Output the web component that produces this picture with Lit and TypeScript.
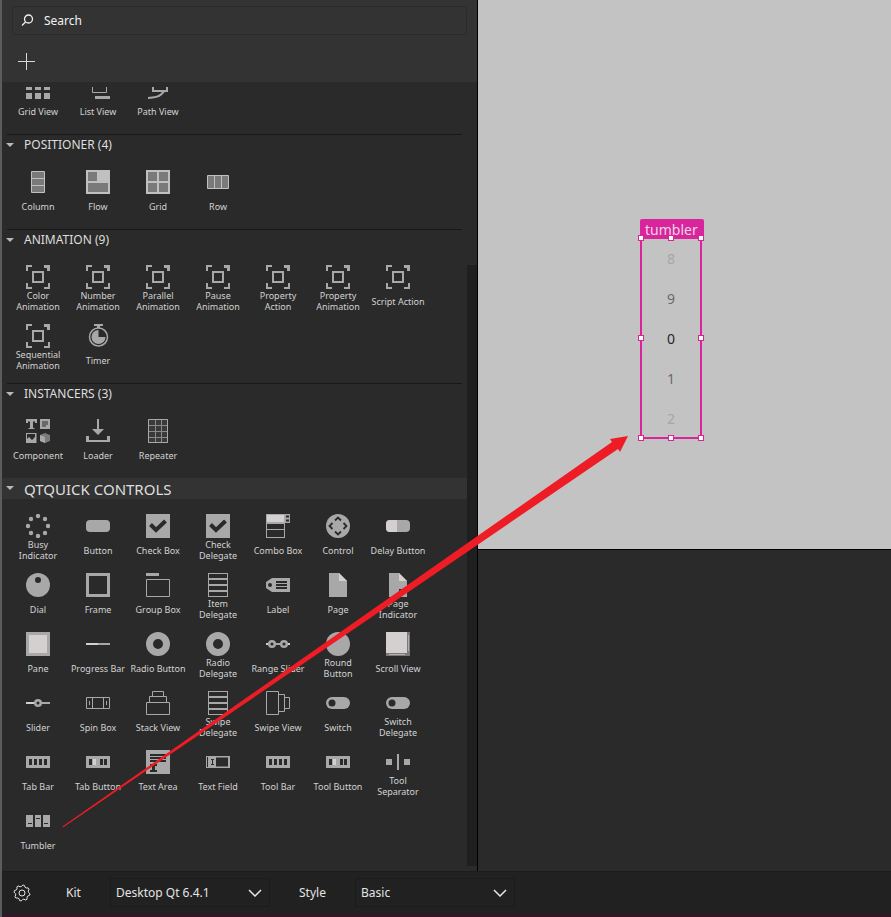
import { LitElement, html, css, svg } from "lit";
import { customElement, query } from "lit/decorators.js";

const brackets = svg`
  <path d="M0 0h6v2h-4v4h-2zM18 0h6v6h-3v-3h-3zM0 18h2v4h4v2h-6zM22 18h2v6h-6v-2h4z"/>
  <path d="M7 7h10v10h-10z" fill="none" stroke="#a8a8a8" stroke-width="2"/>`;
const check = svg`<path d="M0 0h24v24h-24z"/><path d="M4.500 10.500l5.500 5.500 9.500-9" fill="none" stroke="#2a2a2a" stroke-width="4"/>`;
const rows = svg`<path fill-rule="evenodd" d="M2 0h20v24h-20zM3 1v4h18v-4zM3 7v4h18v-4zM3 13v4h18v-4zM3 19v4h18v-4z"/>`;
const ring = svg`<circle cx="12" cy="12" r="8.500" fill="none" stroke="#a8a8a8" stroke-width="7"/>`;
const bar = svg`<path fill-rule="evenodd" d="M0 6h24v12h-24zM3 9v6h3v-6zM8 9v6h3v-6zM13 9v6h3v-6zM18 9v6h3v-6z"/>`;
const barButton = svg`<path fill-rule="evenodd" d="M0 6h24v12h-24zM3 9v6h3v-6zM14 9v6h3v-6zM18 9v6h3v-6z"/><path d="M7 9h3v6h-3z" fill="#d4d0d0"/>`;
const toggle = svg`<rect y="6" width="24" height="12" rx="6"/><circle cx="6" cy="12" r="3.500" fill="#2a2a2a"/>`;
const page = svg`<path d="M3 0h10l8 8v16h-18z"/><path d="M13 0l8 8h-8z" fill="#d4d0d0"/>`;
const line = (d: string) => svg`<path d=${d} fill="none" stroke="#a8a8a8"/>`;

const icons: Record<string, unknown> = {
  gridView: svg`<path d="M0 9h6v6h-6zM9 9h6v6h-6zM18 9h6v6h-6zM0 18h6v6h-6zM9 18h6v6h-6zM18 18h6v6h-6z"/>`,
  listView: svg`${line("M6.500 6v11.500h14v-11.500")}<path d="M9 21h15v3h-15z"/>`,
  pathView: svg`<path d="M6 8h2v7h12v-7h2v9h-16z"/><path d="M2 23q10-.500 13-3.500l3-3" fill="none" stroke="#a8a8a8" stroke-width="2"/>`,
  column: svg`<path d="M5.500 1.500h13v21h-13zM5.500 8.500h13M5.500 15.500h13" fill="#7a7a7a" stroke="#c0c0c0"/>`,
  flow: svg`<path d="M0 0h24v24h-24z" fill="#c0c0c0"/><path d="M2 2h9v9h-9zM2 13h20v9h-20z" fill="#7a7a7a"/>`,
  grid: svg`<path d="M0 0h24v24h-24z" fill="#c0c0c0"/><path d="M2 2h9v9h-9zM13 2h9v9h-9zM2 13h9v9h-9zM13 13h9v9h-9z" fill="#7a7a7a"/>`,
  row: svg`<path d="M1.500 5.500h21v13h-21zM8.500 5.500v13M15.500 5.500v13" fill="#7a7a7a" stroke="#c0c0c0"/>`,
  brackets,
  timer: svg`<path d="M8 0h9v2h-3v2h-3v-2h-3z"/><circle cx="12.500" cy="13" r="9" fill="none" stroke="#a8a8a8" stroke-width="1.500"/><path d="M12.500 6a7 7 0 1 0 7 7h-7z"/>`,
  component: svg`<path d="M0 0h11v4h-2v-1.500h-2v6.500h1.500v1h-6v-1h1.500v-6.500h-2v1.500h-2zM14 0h10v10h-10z"/><path d="M16 3h6M16 5h6M16 7h4" stroke="#2a2a2a"/>
    <path fill-rule="evenodd" d="M0 14h10.500v10h-10.500zM1 15v5l2-2 3 3 3-3v-3z"/><path d="M14 16l5-2 5 2v6l-5 2-5-2z" fill="#7a7a7a"/><path d="M14 16l5 2v6l-5-2z"/>`,
  loader: svg`<path d="M11 0h2v10h5l-6 6-6-6h5zM0 17h3v4h18v-4h3v6h-24z"/>`,
  repeater: svg`<path d="M2.500.500h19v23h-19zM9.500 0v24M15.500 0v24M2 6.500h20M2 12.500h20M2 18.500h20" fill="#3a3a3a" stroke="#8a8a8a"/>${line("M2.500.500h19v23h-19z")}`,
  busy: svg`${[[12, 2], [19, 5], [22, 12], [19, 19], [12, 22], [5, 19], [2, 12], [5, 5]].map(
    ([x, y]) => svg`<circle cx=${x} cy=${y} r="2.200"/>`)}`,
  button: svg`<rect y="6" width="24" height="12" rx="4"/>`,
  check,
  combo: svg`<path fill-rule="evenodd" d="M0 0h24v9h-5v15h-19zM1 10v5h17v-5zM1 16v7h17v-7zM20 1.500v2h3v-2zM20 5.500v2h3v-2z"/><path d="M1 1h17v7h-17z" fill="#d4d0d0"/>`,
  control: svg`<circle cx="12" cy="12" r="12"/><path d="M9 6.500l3-3 3 3M9 17.500l3 3 3-3M6.500 9l-3 3 3 3M17.500 9l3 3-3 3" fill="none" stroke="#2a2a2a" stroke-width="1.800"/>`,
  delay: svg`<rect y="6" width="24" height="12" rx="4"/><path d="M11 6h-7a4 4 0 0 0-4 4v4a4 4 0 0 0 4 4h7z" fill="#d4d0d0"/>`,
  dial: svg`<circle cx="12" cy="12" r="12"/><circle cx="12" cy="7" r="3" fill="#2a2a2a"/>`,
  frame: svg`<path d="M1.500 1.500h21v21h-21z" fill="none" stroke="#a8a8a8" stroke-width="3"/>`,
  group: svg`<path d="M0 0h13v3h-13z"/>${line("M.500 6.500h23v17h-23z")}`,
  rows,
  label: svg`<path d="M6 5h18v14h-18l-6-4v-6z"/><circle cx="4" cy="12" r="2" fill="#2a2a2a"/><path d="M10 9h11M10 12h11M10 15h11" stroke="#2a2a2a" stroke-width="2"/>`,
  page,
  pageIndicator: svg`${page}<path d="M13 16h5v3h-5z" fill="#2a2a2a"/>`,
  pane: svg`<path d="M0 0h24v24h-24z"/><path d="M3 3h18v18h-18z" fill="#d4d0d0"/>`,
  progress: svg`<path d="M0 11h24v2h-24z"/><path d="M0 11h12v2h-12z" fill="#d4d0d0"/>`,
  ring,
  range: svg`<path d="M0 11h24v2h-24z"/><path d="M0 11h3v2h-3zM21 11h3v2h-3z" fill="#d4d0d0"/><circle cx="6" cy="12" r="2.800" fill="#2a2a2a" stroke="#a8a8a8" stroke-width="2.500"/><circle cx="18" cy="12" r="2.800" fill="#2a2a2a" stroke="#a8a8a8" stroke-width="2.500"/>`,
  round: svg`<circle cx="12" cy="12" r="12"/>`,
  scroll: svg`<path d="M0 0h24v24h-24z" fill="#7a7a7a"/><path d="M0 0h21v21h-21z" fill="#d4d0d0"/><path d="M22 3h1v16h-1zM3 22h16v1h-16z" fill="#b0b0b0"/>`,
  slider: svg`<path d="M0 11h24v2h-24z"/><path d="M0 11h8v2h-8z" fill="#d4d0d0"/><circle cx="12" cy="12" r="2.800" fill="#2a2a2a" stroke="#a8a8a8" stroke-width="2.500"/>`,
  spin: line("M.500 6.500h23v11h-23zM6.500 6.500v11M17.500 6.500v11M3.500 10v4M20.500 10v4"),
  stack: line("M.500 11.500h23v12h-23zM3.500 11v-5.500h17v5.500M6.500 5v-4.500h11v4.500"),
  swipe: line("M.500.500h12v23h-12zM13 3.500h5.500v17h-5.500M19 6.500h4.500v11h-4.500"),
  toggle,
  bar,
  barButton,
  textArea: svg`<path d="M0 0h24v24h-24z"/><path d="M4 5h16M4 8h16M4 11h16M4 15h7M4 21h7" stroke="#2a2a2a" stroke-width="2"/><path d="M7.500 14v8" stroke="#2a2a2a" stroke-width="3"/>`,
  textField: svg`<path fill-rule="evenodd" d="M0 6h24v12h-24zM1 7v10h1v-10zM10 7.500v9h12v-9z"/><path d="M5 9.500h3M5 14.500h3M6.500 9v6" stroke="#2a2a2a"/>`,
  separator: svg`<path d="M0 9h6v6h-6zM11 4h2v16h-2zM18 9h6v6h-6z"/>`,
  tumbler: svg`<path fill-rule="evenodd" d="M0 6h7v12h-7zM9 6h6v12h-6zM17 6h7v12h-7zM2 14v1h4v-1zM10 9v1h4v-1zM18 14v1h4v-1z"/>`,
};

type Item = [name: string, icon: string];

const partial: Item[] = [["Grid View", "gridView"], ["List View", "listView"], ["Path View", "pathView"]];

const sections: { title: string; items: Item[]; major?: boolean }[] = [
  { title: "POSITIONER (4)", items: [["Column", "column"], ["Flow", "flow"], ["Grid", "grid"], ["Row", "row"]] },
  {
    title: "ANIMATION (9)",
    items: [
      ["Color Animation", "brackets"], ["Number Animation", "brackets"], ["Parallel Animation", "brackets"],
      ["Pause Animation", "brackets"], ["Property Action", "brackets"], ["Property Animation", "brackets"],
      ["Script Action", "brackets"], ["Sequential Animation", "brackets"], ["Timer", "timer"],
    ],
  },
  { title: "INSTANCERS (3)", items: [["Component", "component"], ["Loader", "loader"], ["Repeater", "repeater"]] },
  {
    title: "QTQUICK CONTROLS",
    major: true,
    items: [
      ["Busy Indicator", "busy"], ["Button", "button"], ["Check Box", "check"], ["Check Delegate", "check"],
      ["Combo Box", "combo"], ["Control", "control"], ["Delay Button", "delay"],
      ["Dial", "dial"], ["Frame", "frame"], ["Group Box", "group"], ["Item Delegate", "rows"],
      ["Label", "label"], ["Page", "page"], ["Page Indicator", "pageIndicator"],
      ["Pane", "pane"], ["Progress Bar", "progress"], ["Radio Button", "ring"], ["Radio Delegate", "ring"],
      ["Range Slider", "range"], ["Round Button", "round"], ["Scroll View", "scroll"],
      ["Slider", "slider"], ["Spin Box", "spin"], ["Stack View", "stack"], ["Swipe Delegate", "rows"],
      ["Swipe View", "swipe"], ["Switch", "toggle"], ["Switch Delegate", "toggle"],
      ["Tab Bar", "bar"], ["Tab Button", "barButton"], ["Text Area", "textArea"], ["Text Field", "textField"],
      ["Tool Bar", "bar"], ["Tool Button", "barButton"], ["Tool Separator", "separator"],
      ["Tumbler", "tumbler"],
    ],
  },
];

@customElement("component-library")
export class ComponentLibrary extends LitElement {
  @query(".list") private list!: HTMLElement;

  static styles = css`
    :host { display: flex; flex-direction: column; min-height: 0; background: #2a2a2a; color: #d2d2d2; }
    button { font: inherit; color: inherit; background: none; border: 0; padding: 0; margin: 0; }
    .tools { display: flex; flex-direction: column; align-items: flex-start; gap: 14px; flex: none; box-sizing: border-box; height: 82px; padding: 6px 10px; background: #333; }
    .search { display: flex; flex: none; align-items: center; gap: 10px; align-self: stretch; height: 27px; padding: 0 8px; border: 1px solid #2b2b2b; border-radius: 3px; }
    .search svg { fill: none; stroke: #f2f2f2; stroke-width: 1.3; }
    .search input { flex: 1; min-width: 0; padding: 0; border: 0; outline: 0; background: none; color: #fff; font: 12px "Noto Sans", sans-serif; }
    .search input::placeholder { color: #f2f2f2; opacity: 1; }
    .add { display: flex; padding: 4px 6px; }
    .body { flex: 1; min-height: 0; display: flex; padding: 5px 0 3px; }
    .list { flex: 1; min-width: 0; overflow-y: auto; scrollbar-width: none; }
    .thumb { width: 10px; height: 77%; align-self: flex-end; margin-bottom: 2px; background: #1f1f1f; }
    .head { display: flex; align-items: center; gap: 10px; width: calc(100% - 10px); height: 21px; margin: 0 5px; border-top: 1px solid #191919; font-size: 12px; line-height: 20px; color: #dedede; }
    .head svg { fill: #b8b8b8; margin-left: -1px; }
    .major { width: 100%; margin: 0; padding: 0 5px; border: 0; background: #333; font-size: 15px; }
    .cells { display: grid; grid-template-columns: repeat(auto-fill, 60px); padding: 10px 0 5px 6px; }
    .cell { display: flex; flex-direction: column; align-items: center; height: 59px; padding: 5px 0; box-sizing: border-box; }
    .cell svg { fill: #a8a8a8; flex: none; }
    .name { display: flex; align-items: center; height: 24px; width: 58px; justify-content: center; text-align: center; font-size: 9px; line-height: 11px; }
    .wide { white-space: nowrap; }
  `;

  protected firstUpdated() {
    this.list.scrollTop = this.list.scrollHeight;
  }

  private cells(items: Item[]) {
    return html`<div class="cells">
      ${items.map(([name, icon]) => html`<button class="cell">
        <svg width="24" height="24" aria-hidden="true">${icons[icon]}</svg>
        <span class="name">${this.label(name)}</span>
      </button>`)}
    </div>`;
  }

  private label(name: string) {
    const oneLine = name.length <= 13 && !/^(Round|Item)/.test(name);
    return oneLine ? html`<span class="wide">${name}</span>` : html`<span>${name.split(" ")[0]}<br>${name.split(" ")[1]}</span>`;
  }

  render() {
    return html`
      <div class="tools">
        <label class="search">
          <svg width="13" height="13" aria-hidden="true"><circle cx="7.500" cy="5" r="4"/><path d="M4.500 8l-3.500 3.500"/></svg>
          <input type="text" placeholder="Search" aria-label="Search">
        </label>
        <button class="add" aria-label="Add module">
          <svg width="17" height="17" aria-hidden="true"><path d="M8.500 0v17M0 8.500h17" stroke="#d8d8d8"/></svg>
        </button>
      </div>
      <div class="body">
        <div class="list">
          ${this.cells(partial)}
          ${sections.map((s) => html`
            <button class="head ${s.major ? "major" : ""}">
              <svg width="8" height="5" aria-hidden="true"><path d="M0 0h8l-4 4z"/></svg>${s.title}
            </button>
            ${this.cells(s.items)}`)}
        </div>
        <div class="thumb"></div>
      </div>`;
  }
}

@customElement("form-editor")
export class FormEditor extends LitElement {
  static styles = css`
    :host { display: flex; flex-direction: column; min-width: 0; }
    .canvas { flex: 1; position: relative; background: #c3c3c3; }
    .output { height: 321px; border-top: 1px solid #000; background: #2a2a2a; }
    .item { position: absolute; left: 162px; top: 237px; width: 58px; height: 198px; border: 2px solid #d9259b; }
    .tag { position: absolute; left: -2px; bottom: 198px; height: 20px; padding: 0 6px 0 5px; border-radius: 2px; background: #d9259b; color: #ecd5e4; font-size: 14px; line-height: 21px; }
    .values { display: flex; flex-direction: column; margin: 0; padding: 0; list-style: none; text-align: center; font-size: 14px; line-height: 40px; color: #262626; }
    .near { color: #6a6a6a; }
    .far { color: #a6a6a6; }
    .handles { position: absolute; inset: -4px; display: grid; grid-template-columns: repeat(3, 6px); grid-template-rows: repeat(3, 6px); place-content: space-between; }
    .handle { box-sizing: border-box; background: #fff; border: 1px solid #d9259b; }
    .gap { visibility: hidden; }
  `;

  render() {
    const values: [number, string][] = [[8, "far"], [9, "near"], [0, ""], [1, "near"], [2, "far"]];
    return html`
      <div class="canvas">
        <div class="item">
          <span class="tag">tumbler</span>
          <ul class="values">${values.map(([n, c]) => html`<li class=${c}>${n}</li>`)}</ul>
          <div class="handles">
            ${Array.from({ length: 9 }, (_, i) => html`<span class="handle ${i === 4 ? "gap" : ""}"></span>`)}
          </div>
        </div>
      </div>
      <div class="output"></div>`;
  }
}

@customElement("status-bar")
export class StatusBar extends LitElement {
  static styles = css`
    :host { display: flex; align-items: center; height: 41px; border-top: 1px solid #1c1c1c; border-bottom: 3px solid #351626; padding: 0 0 1px 10px; background: #212121; color: #e4e4e4; font-size: 12px; }
    button { display: flex; background: none; border: 0; padding: 0; margin-right: 34px; }
    label { width: 44px; }
    .style { margin-left: 29px; width: 56px; }
    .combo { display: grid; width: 160px; align-items: center; }
    select { grid-area: 1 / 1; appearance: none; height: 29px; padding: 0 5px; border: 1px solid #1b1b1b; border-radius: 2px; background: none; color: inherit; font: 12px "Noto Sans", sans-serif; }
    .combo svg { grid-area: 1 / 1; justify-self: end; margin-right: 8px; pointer-events: none; }
    svg { fill: none; stroke: #e4e4e4; }
  `;

  private combo(id: string, value: string) {
    return html`<span class="combo">
      <select id=${id}><option>${value}</option></select>
      <svg width="14" height="8" aria-hidden="true"><path d="M1 1l6 6 6-6" stroke-width="1.500"/></svg>
    </span>`;
  }

  render() {
    const gear = Array.from({ length: 32 }, (_, i) => {
      const a = ((i + 0.5) * Math.PI) / 16;
      const r = i % 4 < 2 ? 8 : 6.5;
      return `${9 + r * Math.cos(a)},${9 + r * Math.sin(a)}`;
    }).join(" ");
    return html`
      <button aria-label="Settings">
        <svg width="20" height="18" viewBox="-1 0 20 18" aria-hidden="true"><polygon points=${gear}/><circle cx="9" cy="9" r="3"/></svg>
      </button>
      <label for="kit">Kit</label>${this.combo("kit", "Desktop Qt 6.4.1")}
      <label class="style" for="style">Style</label>${this.combo("style", "Basic")}`;
  }
}

@customElement("app-root")
export class AppRoot extends LitElement {
  static styles = css`
    :host { position: relative; display: grid; grid-template: minmax(0, 1fr) auto / 475px minmax(0, 1fr); height: 100vh; box-sizing: border-box; border-left: 2px solid #5c5c5c; overflow: hidden; background: #2a2a2a; font-family: "Noto Sans", sans-serif; }
    form-editor { border-left: 1px solid #000; }
    status-bar { grid-column: 1 / -1; }
    .arrow { position: absolute; left: -2px; top: 0; pointer-events: none; fill: #ee1c25; }
  `;

  render() {
    return html`
      <component-library></component-library>
      <form-editor></form-editor>
      <status-bar></status-bar>
      <svg class="arrow" width="640" height="840" aria-hidden="true">
        <path d="M62.500 826.500L612 442l-2-3 18-3-8 16-2-3L63 827.500z"/>
      </svg>`;
  }
}
